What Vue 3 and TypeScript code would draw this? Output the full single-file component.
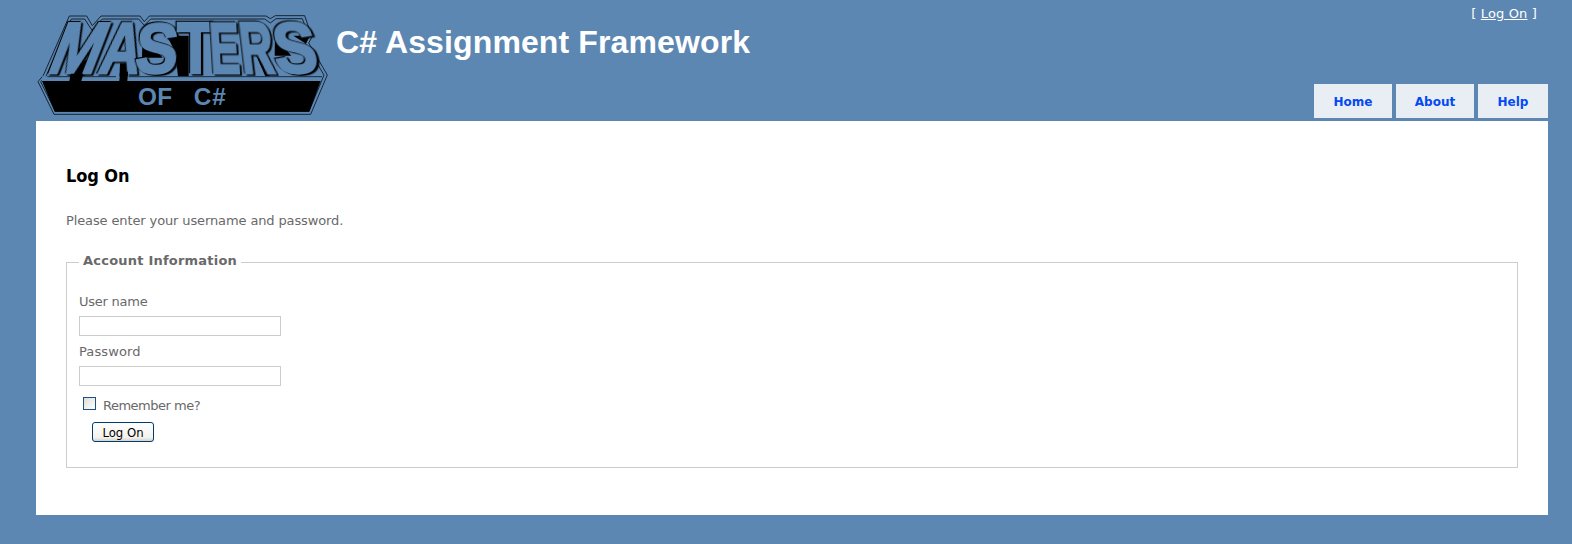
<script setup lang="ts">
import { ref } from 'vue'

interface LogoLetter {
  char: string
  matrix: string
}

const letters: LogoLetter[] = [
  { char: 'M', matrix: 'matrix(0.84 0 -0.4 1.03 46 205)' },
  { char: 'A', matrix: 'matrix(0.8 0 -0.2 1.03 201 205)' },
  { char: 'S', matrix: 'matrix(0.9 0 -0.08 1 312 204)' },
  { char: 'T', matrix: 'matrix(0.86 0 0 1.03 441 205)' },
  { char: 'E', matrix: 'matrix(0.64 0 0.06 1.03 543 205)' },
  { char: 'R', matrix: 'matrix(0.66 0 0.12 1.03 638 205)' },
  { char: 'S', matrix: 'matrix(0.92 0 0.14 1 740 204)' },
]

const tabs: string[] = ['Home', 'About', 'Help']
const userName = ref('')
const password = ref('')
const remember = ref(false)
</script>

<template>
  <div class="page">
    <header class="header">
      <svg class="logo" viewBox="0 0 900 360" aria-label="Masters of C#">
        <g class="outline">
          <path d="M118 33H170L187 62L213 33H330L343 50L358 33H708L721 41L736 32H824L846 96L836 114L892 210L842 328H72L24 230L40 211Z" />
          <path d="M124 42H164L186 76L217 42H326L343 61L362 42H704L721 54L738 41H817L837 96L826 116L882 210L837 319H76L32 230L48 214Z" />
        </g>
        <path d="M36 228H872L838 320H74Z" />
        <path d="M122 150L136 188L190 148L158 227H118Z" />
        <path d="M270 175H298L292 227H268Z" />
        <path d="M338 84L398 158H336Z" />
        <path d="M410 92H476V215H444L436 140Z" />
        <path d="M735 92L784 152H734Z" />
        <path d="M790 92H838L828 116Z" />
        <path d="M676 146L722 205L712 227Z" />
        <g class="face">
          <text v-for="(l, i) in letters" :key="i" :transform="l.matrix">{{ l.char }}</text>
        </g>
        <path class="ledge" d="M36 221H868" />
        <path class="rule" d="M52 215H258M296 215H876" />
        <path d="M122 206H160L154 228H118Z" />
        <path d="M270 200H294L292 228H268Z" />
        <g class="sub">
          <text x="324" y="299" textLength="102">OF</text>
          <text x="491" y="299" textLength="96">C#</text>
        </g>
      </svg>
      <h1>C# Assignment Framework</h1>
      <div class="side">
        <div class="login">[ <a>Log On</a> ]</div>
        <nav class="menu">
          <a v-for="t in tabs" :key="t" :class="t.toLowerCase()">{{ t }}</a>
        </nav>
      </div>
    </header>
    <main class="main">
      <h2>Log On</h2>
      <p class="intro">Please enter your username and password.</p>
      <form class="account" @submit.prevent>
        <fieldset>
          <legend>Account Information</legend>
          <label class="caption name" for="user">User name</label>
          <input id="user" v-model="userName" class="field" type="text" />
          <label class="caption pass" for="pass">Password</label>
          <input id="pass" v-model="password" class="field" type="password" />
          <label class="remember">
            <input v-model="remember" type="checkbox" />
            <span>Remember me?</span>
          </label>
          <button type="submit">Log On</button>
        </fieldset>
      </form>
    </main>
  </div>
</template>

<style>
html,
body {
  margin: 0;
  background: #5c87b2;
}
</style>

<style scoped>
.page {
  box-sizing: border-box;
  width: 1572px;
  height: 544px;
  padding: 0 24px 0 36px;
  background: #5c87b2;
  color: #696969;
  font: 13px/16px "DejaVu Sans", Verdana, sans-serif;
}
.header {
  display: flex;
  height: 121px;
}
.logo {
  flex: none;
  width: 300px;
  height: 120px;
  margin: 5px 0 0 -6px;
  overflow: visible;
}
.outline path {
  fill: none;
  stroke: #162535;
  stroke-width: 3;
}
.face text {
  fill: #5c87b2;
  stroke: #5c87b2;
  stroke-width: 7;
  font: bold 212px "Liberation Sans", Arial, sans-serif;
  filter: drop-shadow(8px 4px 0 #000) drop-shadow(-4px -3px 0 #000);
}
.ledge {
  fill: none;
  stroke: #5c87b2;
  stroke-width: 14;
}
.rule {
  fill: none;
  stroke: #162535;
  stroke-width: 2.8;
}
.sub text {
  fill: #5c87b2;
  font: bold 73px "Liberation Sans", Arial, sans-serif;
}
h1 {
  margin: 23px 0 0 6px;
  color: #fff;
  font: bold 32px/38px "Liberation Sans", Arial, sans-serif;
  letter-spacing: 0.12px;
  white-space: nowrap;
}
.side {
  display: flex;
  flex: 1;
  flex-direction: column;
  align-items: flex-end;
  justify-content: space-between;
  padding-bottom: 3px;
}
.login {
  margin: 6px 11px 0 0;
  color: #fff;
  letter-spacing: 0.15px;
  white-space: pre;
}
.login a {
  text-decoration: underline;
}
.menu {
  display: flex;
  gap: 4px;
}
.menu a {
  box-sizing: border-box;
  width: 78px;
  height: 34px;
  padding-top: 1px;
  background: #e8eef4;
  color: #034af3;
  font-size: 12px;
  font-weight: bold;
  line-height: 34px;
  text-align: center;
}
.menu .help {
  width: 70px;
}
.main {
  box-sizing: border-box;
  height: 394px;
  padding: 44px 30px 0;
  background: #fff;
}
h2 {
  margin: 0;
  color: #000;
  font: bold 18px/22px "DejaVu Sans Condensed", "DejaVu Sans", Verdana, sans-serif;
  letter-spacing: -0.1px;
}
.intro {
  margin: 26px 0 0;
  letter-spacing: -0.12px;
}
fieldset {
  box-sizing: border-box;
  display: flex;
  flex-direction: column;
  align-items: flex-start;
  height: 215px;
  min-width: 0;
  margin: 24px 0 0;
  padding: 0 12px;
  border: 1px solid #ccc;
}
legend {
  height: 18px;
  padding: 0 4px;
  font-weight: bold;
  letter-spacing: 0.22px;
  line-height: 16px;
}
.name {
  margin-top: 23px;
  letter-spacing: -0.25px;
}
.pass {
  margin-top: 8px;
  letter-spacing: 0.1px;
}
.field {
  box-sizing: border-box;
  width: 202px;
  height: 20px;
  margin: 6px 0 0;
  padding: 2px;
  border: 1px solid #ccc;
  background: #fff;
}
.remember {
  display: flex;
  align-items: flex-start;
  margin: 11px 0 0 4px;
}
.remember input {
  box-sizing: border-box;
  width: 13px;
  height: 13px;
  margin: 0 7px 0 0;
  border: 1px solid #1c5180;
  background: linear-gradient(135deg, #dcdcd7, #fff);
  appearance: none;
}
.remember span {
  margin-top: 1px;
  letter-spacing: -0.5px;
}
button {
  box-sizing: border-box;
  width: 62px;
  height: 20px;
  margin: 8px 0 0 13px;
  padding: 1px 0 0;
  border: 1px solid #003c74;
  border-radius: 3px;
  background: linear-gradient(#fff, #f3f2ec 80%, #d8d2c8);
  color: #000;
  font: 13px/17px "DejaVu Sans Condensed", "DejaVu Sans", sans-serif;
}
</style>
